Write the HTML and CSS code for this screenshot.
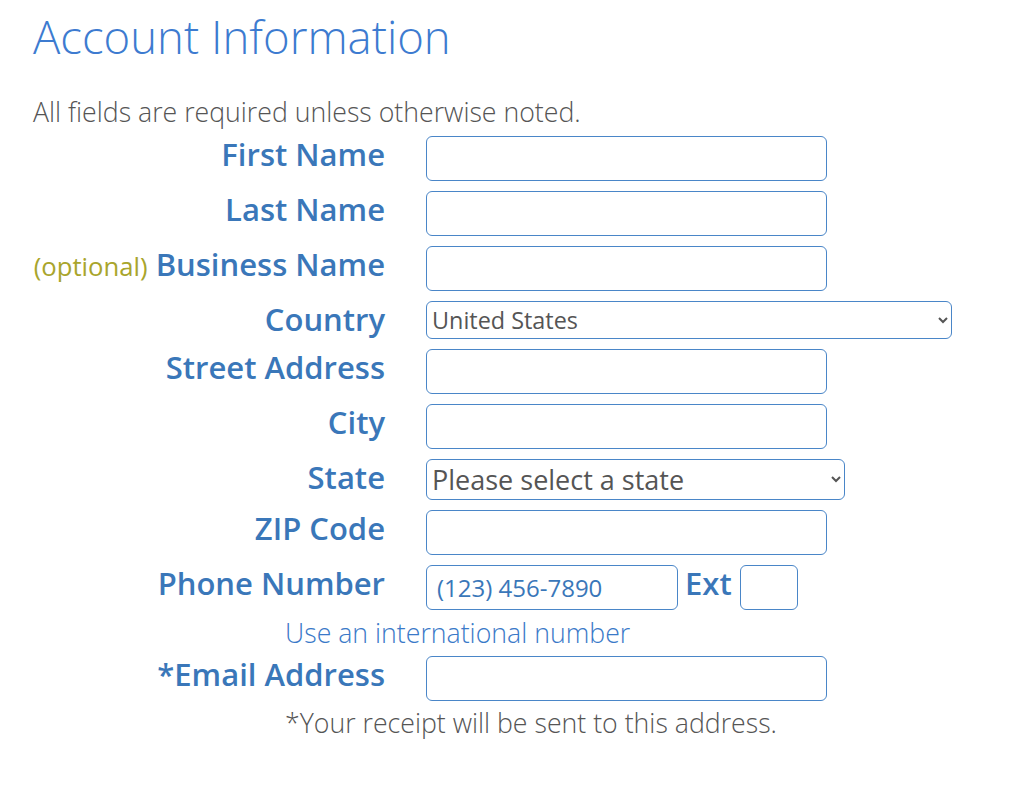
FILE: index.html
```html
<!DOCTYPE html>
<html lang="en">
<head>
    <meta charset="UTF-8">
    <title>Account Information</title>
    <link rel="stylesheet" href="styles.css">
</head>
<body>
    <div class="container">
        <h1>Account Information</h1>
        <p class="note">All fields are required unless otherwise noted.</p>
        <form class="form-grid" autocomplete="off">
            <label for="firstName">First Name</label>
            <div class="field"><input type="text" id="firstName"></div>

            <label for="lastName">Last Name</label>
            <div class="field"><input type="text" id="lastName"></div>

            <label for="businessName"><span class="optional">(optional)</span> Business Name</label>
            <div class="field"><input type="text" id="businessName"></div>

            <label for="country">Country</label>
            <div class="field">
                <select id="country" class="country">
                    <option selected>United States</option>
                    <option>Canada</option>
                </select>
            </div>

            <label for="street">Street Address</label>
            <div class="field"><input type="text" id="street"></div>

            <label for="city">City</label>
            <div class="field"><input type="text" id="city"></div>

            <label for="state">State</label>
            <div class="field">
                <select id="state" class="state">
                    <option selected>Please select a state</option>
                    <option>Alabama</option>
                </select>
            </div>

            <label for="zip">ZIP Code</label>
            <div class="field"><input type="text" id="zip"></div>

            <label for="phone">Phone Number</label>
            <div class="field phone-row">
                <input type="text" id="phone" class="phone" placeholder="(123) 456-7890">
                <label for="ext" class="ext-label">Ext</label>
                <input type="text" id="ext" class="ext">
            </div>

            <div class="intl"><a href="#">Use an international number</a></div>

            <label for="email">*Email Address</label>
            <div class="field"><input type="text" id="email"></div>

            <div class="receipt">*Your receipt will be sent to this address.</div>
        </form>
    </div>
</body>
</html>
```

FILE: styles.css
```css
body {
    font-family: "Open Sans", "Noto Sans", sans-serif;
    background: #fff;
    margin: 0;
    padding: 0;
}

.container {
    padding: 8px 0 0 33px;
}

h1 {
    font-size: 45.5px;
    font-weight: 300;
    line-height: 56px;
    color: #3d7bd0;
    margin: 0;
}

.note {
    font-size: 26.7px;
    font-weight: 300;
    line-height: 34px;
    color: #555;
    margin: 31px 0 7px;
}

.form-grid {
    display: grid;
    grid-template-columns: 352px auto;
    column-gap: 41px;
    row-gap: 10px;
    align-items: start;
}

.form-grid > label {
    text-align: right;
    font-size: 31px;
    font-weight: 600;
    line-height: 36px;
    color: #3a77b9;
    white-space: nowrap;
}

.optional {
    font-size: 25.7px;
    font-weight: 400;
    color: #a9a52c;
}

.field {
    display: flex;
    align-items: flex-start;
}

input[type="text"], select {
    box-sizing: border-box;
    width: 401px;
    height: 45px;
    border: 1.5px solid #4a86c8;
    border-radius: 6px;
    background: #fff;
    font-family: "Open Sans", "Noto Sans", sans-serif;
    padding: 0 8px;
    margin: 0;
}

select {
    color: #555;
    padding: 0 1px;
}

select.country {
    width: 526px;
    height: 38px;
    font-size: 23.4px;
}

select.state {
    width: 419px;
    height: 41px;
    font-size: 27px;
}

.phone-row input.phone {
    width: 252px;
    font-size: 24px;
    padding: 0 10px;
}

    .phone-row input.phone::placeholder {
        color: #3a77b9;
        opacity: 1;
    }

.ext-label {
    font-size: 31px;
    font-weight: 600;
    line-height: 36px;
    color: #3a77b9;
    margin: 0 8px 0 7px;
}

.phone-row input.ext {
    width: 58px;
}

.intl, .receipt {
    grid-column: 1 / 3;
    padding-left: 252px;
    font-size: 26.7px;
    font-weight: 300;
}

.intl {
    line-height: 26px;
}

    .intl a {
        color: #3a79c8;
        text-decoration: none;
    }

.receipt {
    line-height: 32px;
    margin-top: -4px;
    color: #555;
}
```
